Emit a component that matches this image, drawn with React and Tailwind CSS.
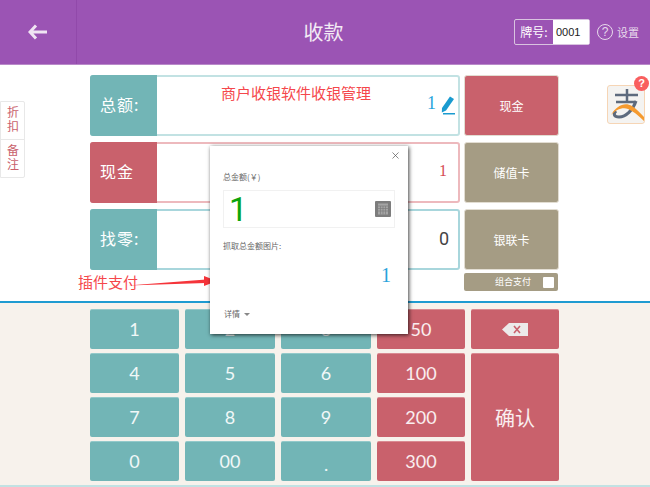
import { X } from 'lucide-react';

const cjk = "font-['Noto_Sans_CJK_SC','Noto_Sans',sans-serif]";

function Row({ label, labelBg, border, children }) {
  return (
    <div className={`flex h-[61px] rounded-[3px] border-2 bg-white ${border}`}>
      <div className={`w-[67px] -my-[2px] -ml-[2px] rounded-l-[3px] shrink-0 flex items-center pl-[10px] pb-[4px] text-white text-[16px] tracking-[1px] ${labelBg}`}>{label}</div>
      <div className="flex-1 relative flex items-center justify-end pr-[3px]">{children}</div>
    </div>
  );
}

function PayButton({ bg, children }) {
  return (
    <button className={`h-[61px] rounded-[3px] text-white text-[12px] flex items-center justify-center border border-[#e2ddd2] ${bg}`}>{children}</button>
  );
}

function Key({ red, className = '', children }) {
  return (
    <button className={`flex items-center justify-center text-white/90 text-[18px] rounded-[2px] font-['Lato',sans-serif] ${red ? 'bg-[#c9616c] border-t border-[#d98a92]' : 'bg-[#72b5b6] border-t border-[#93c9ca]'} ${className}`}>{children}</button>
  );
}

function Pencil() {
  return (
    <svg width="14" height="19" viewBox="0 0 14 19" className="ml-[5px]">
      <path d="M9 0.500 13 3 5 14.500 0.800 16.500 1 12Z" fill="#1a9bd0" />
      <rect x="2" y="17" width="12" height="1.500" fill="#1a9bd0" />
    </svg>
  );
}

function Alipay() {
  return (
    <div className="relative w-[38px] h-[39px] rounded-[3px] border border-[#f6d5b5] bg-[#f4f3f1]">
      <svg width="36" height="37" viewBox="0 0 36 37">
        <path d="M7 9H30M19 3V16M8 16H28" stroke="#5d6a7d" strokeWidth="2.500" fill="none" />
        <path d="M28 15C25 24 18 31 11 31 6 31 5 28 8 25" stroke="#5d6a7d" strokeWidth="3" fill="none" />
        <path d="M3 29C9 19 17 16 24 20 29 23 32 27 36 31L36 35C30 29 25 25 20 23 14 21 8 24 3 29Z" fill="#f59a2f" />
      </svg>
      <span className="absolute -top-[10px] -right-[5px] w-[15px] h-[15px] rounded-full bg-[#f95f5f] text-white text-[11px] font-bold leading-[15px] text-center font-['Liberation_Sans',sans-serif]">?</span>
    </div>
  );
}

function Backspace() {
  return (
    <svg width="26" height="13" viewBox="0 0 26 13">
      <path d="M7 0H26V13H7L0 6.500Z" fill="#eceaea" />
      <path d="M12 3 18 10M18 3 12 10" stroke="#c9616c" strokeWidth="1.6" />
    </svg>
  );
}

function Calculator() {
  return (
    <svg width="16" height="16" viewBox="0 0 16 16">
      <rect width="16" height="16" rx="1" fill="#7d7d7d" />
      <rect x="3" y="2.500" width="10" height="11" fill="#a5a5a5" />
      <path d="M3 5H13M3 7.500H13M3 10H13M5.500 5V13.500M8 5V13.500M10.500 5V13.500" stroke="#7d7d7d" strokeWidth="0.7" />
    </svg>
  );
}

function Modal() {
  return (
    <div className="absolute left-[210px] top-[146px] w-[198px] h-[188px] bg-white shadow-[1px_1px_4px_rgba(0,0,0,0.75)] px-[13px] z-20">
      <X size={11} strokeWidth={1.5} className="absolute right-[7px] top-[4px] text-[#555]" />
      <div className="text-[8px] text-[#666] mt-[25px] leading-[12px]">总金额(￥)</div>
      <div className="mt-[7px] h-[38px] border border-[#f1f1f1] flex items-center justify-between pl-[5px] pr-[3px]">
        <span className="text-[#0ca50c] text-[33px] leading-none font-['Roboto',sans-serif]">1</span>
        <Calculator />
      </div>
      <div className="text-[8px] text-[#666] mt-[12px] leading-[12px]">抓取总金额图片:</div>
      <div className="text-right text-[#27a3dc] text-[20px] leading-[24px] mt-[11px] pr-[4px] font-['Liberation_Serif',serif]">1</div>
      <div className="absolute left-[14px] bottom-[14px] flex items-center text-[8px] text-[#666]">
        详情
        <span className="ml-[4px] w-0 h-0 border-x-[3px] border-x-transparent border-t-[3px] border-t-[#888]" />
      </div>
    </div>
  );
}

function Annotation() {
  return (
    <>
      <span className="absolute left-[78px] top-[272px] text-[15px] leading-[20px] text-[#f5474b] z-10">插件支付</span>
      <svg width="90" height="14" viewBox="0 0 90 14" className="absolute left-[128px] top-[274px] z-10">
        <path d="M0 11.500 78 5.500V9Z" fill="#f5343a" />
        <path d="M76 2 89 7 76 12Z" fill="#f5343a" />
      </svg>
    </>
  );
}

export default function App() {
  return (
    <div className={`relative w-[650px] h-[487px] overflow-hidden bg-white ${cjk}`}>
      <header className="h-[65px] bg-[#9b54b4] border-b border-[#b98ac9] grid grid-cols-[1fr_auto_1fr] items-center text-white">
        <div className="w-[77px] h-full flex items-center justify-center border-r border-[#9149aa]">
          <svg width="20" height="16" viewBox="0 0 20 16">
            <path d="M8 1.500 2 8 8 14.500M2.500 8H19" stroke="#f0e4f3" strokeWidth="3" fill="none" />
          </svg>
        </div>
        <h1 className="text-center text-[20px] text-[#f3ebf5] pr-[3px]">收款</h1>
        <div className="flex items-center justify-end">
          <div className="flex h-[26px] w-[76px] border border-[#d9c3e0] rounded-[2px] text-[12px] shrink-0">
            <div className="w-[38px] flex items-center justify-center">牌号:</div>
            <div className="flex-1 bg-white text-[#222] text-[11px] pl-[3px] flex items-center font-['Liberation_Sans',sans-serif]">0001</div>
          </div>
          <div className="flex items-center ml-[7px] mr-[11px] text-[11px] text-[#e8daec] shrink-0">
            <span className="w-[16px] h-[16px] rounded-full border border-[#e8daec] flex items-center justify-center text-[12px] mr-[4px] font-['Liberation_Sans',sans-serif]">?</span>
            设置
          </div>
        </div>
      </header>

      <main className="h-[236px] flex relative">
        <div className="w-[90px] shrink-0 pt-[36px]">
          <div className="w-[25px] h-[77px] bg-white border border-[#e8e8e8] rounded-r-[2px] text-[#c9616c] text-[12px] flex flex-col items-center divide-y divide-[#e8e8e8]">
            <div className="h-[38px] w-full flex items-center justify-center [writing-mode:vertical-rl] tracking-[2px]">折扣</div>
            <div className="h-[38px] w-full flex items-center justify-center [writing-mode:vertical-rl] tracking-[2px]">备注</div>
          </div>
        </div>

        <div className="w-[370px] shrink-0 pt-[10px] flex flex-col gap-[6px]">
          <Row label="总额:" labelBg="bg-[#72b5b6]" border="border-[#c2e2e3]">
            <span className="absolute left-[64px] top-[6px] text-[15px] leading-[20px] text-[#f5474b]">商户收银软件收银管理</span>
            <span className="text-[#27a3dc] text-[18px] -mt-[4px] font-['Liberation_Serif',serif]">1</span>
            <span className="flex -mt-[1px]"><Pencil /></span>
          </Row>
          <Row label="现金" labelBg="bg-[#c9616c]" border="border-[#edb9bd]">
            <span className="text-[#d64a55] text-[16px] -mt-[4px] pr-[8px] font-['Liberation_Serif',serif]">1</span>
          </Row>
          <Row label="找零:" labelBg="bg-[#72b5b6]" border="border-[#a8d6dc]">
            <span className="text-[#444] text-[18px] -mt-[2px] pr-[6px] font-['Roboto',sans-serif]">0</span>
          </Row>
        </div>

        <div className="w-[95px] ml-[4px] shrink-0 pt-[10px] flex flex-col gap-[6px]">
          <PayButton bg="bg-[#c9616c]">现金</PayButton>
          <PayButton bg="bg-[#a59c84]">储值卡</PayButton>
          <PayButton bg="bg-[#a59c84]">银联卡</PayButton>
          <div className="-mt-[3px] h-[18px] w-[94px] bg-[#a59c84] rounded-[2px] flex items-center justify-end text-white text-[9px]">
            组合支付
            <span className="w-[11px] h-[11px] bg-white rounded-[1px] ml-[12px] mr-[4px]" />
          </div>
        </div>

        <div className="ml-[48px] pt-[20px]"><Alipay /></div>
      </main>

      <section className="h-[186px] bg-[#f7f2ec] border-t-2 border-[#1f9bd1] border-b-2 border-b-[#c2e2e3] pl-[90px] pt-[6px]">
        <div className="grid grid-cols-[89px_90px_90px_88px_88px] grid-rows-[40px_40px_40px_40px] gap-x-[6px] gap-y-[4px] w-[469px]">
          <Key>1</Key>
          <Key>2</Key>
          <Key>3</Key>
          <Key red>50</Key>
          <Key red><Backspace /></Key>
          <Key>4</Key>
          <Key>5</Key>
          <Key>6</Key>
          <Key red>100</Key>
          <Key red className={`row-span-3 text-[20px] ${cjk}`}>确认</Key>
          <Key>7</Key>
          <Key>8</Key>
          <Key>9</Key>
          <Key red>200</Key>
          <Key>0</Key>
          <Key>00</Key>
          <Key className="text-[10px] pt-[5px]">.</Key>
          <Key red>300</Key>
        </div>
      </section>

      <Annotation />
      <Modal />
    </div>
  );
}
